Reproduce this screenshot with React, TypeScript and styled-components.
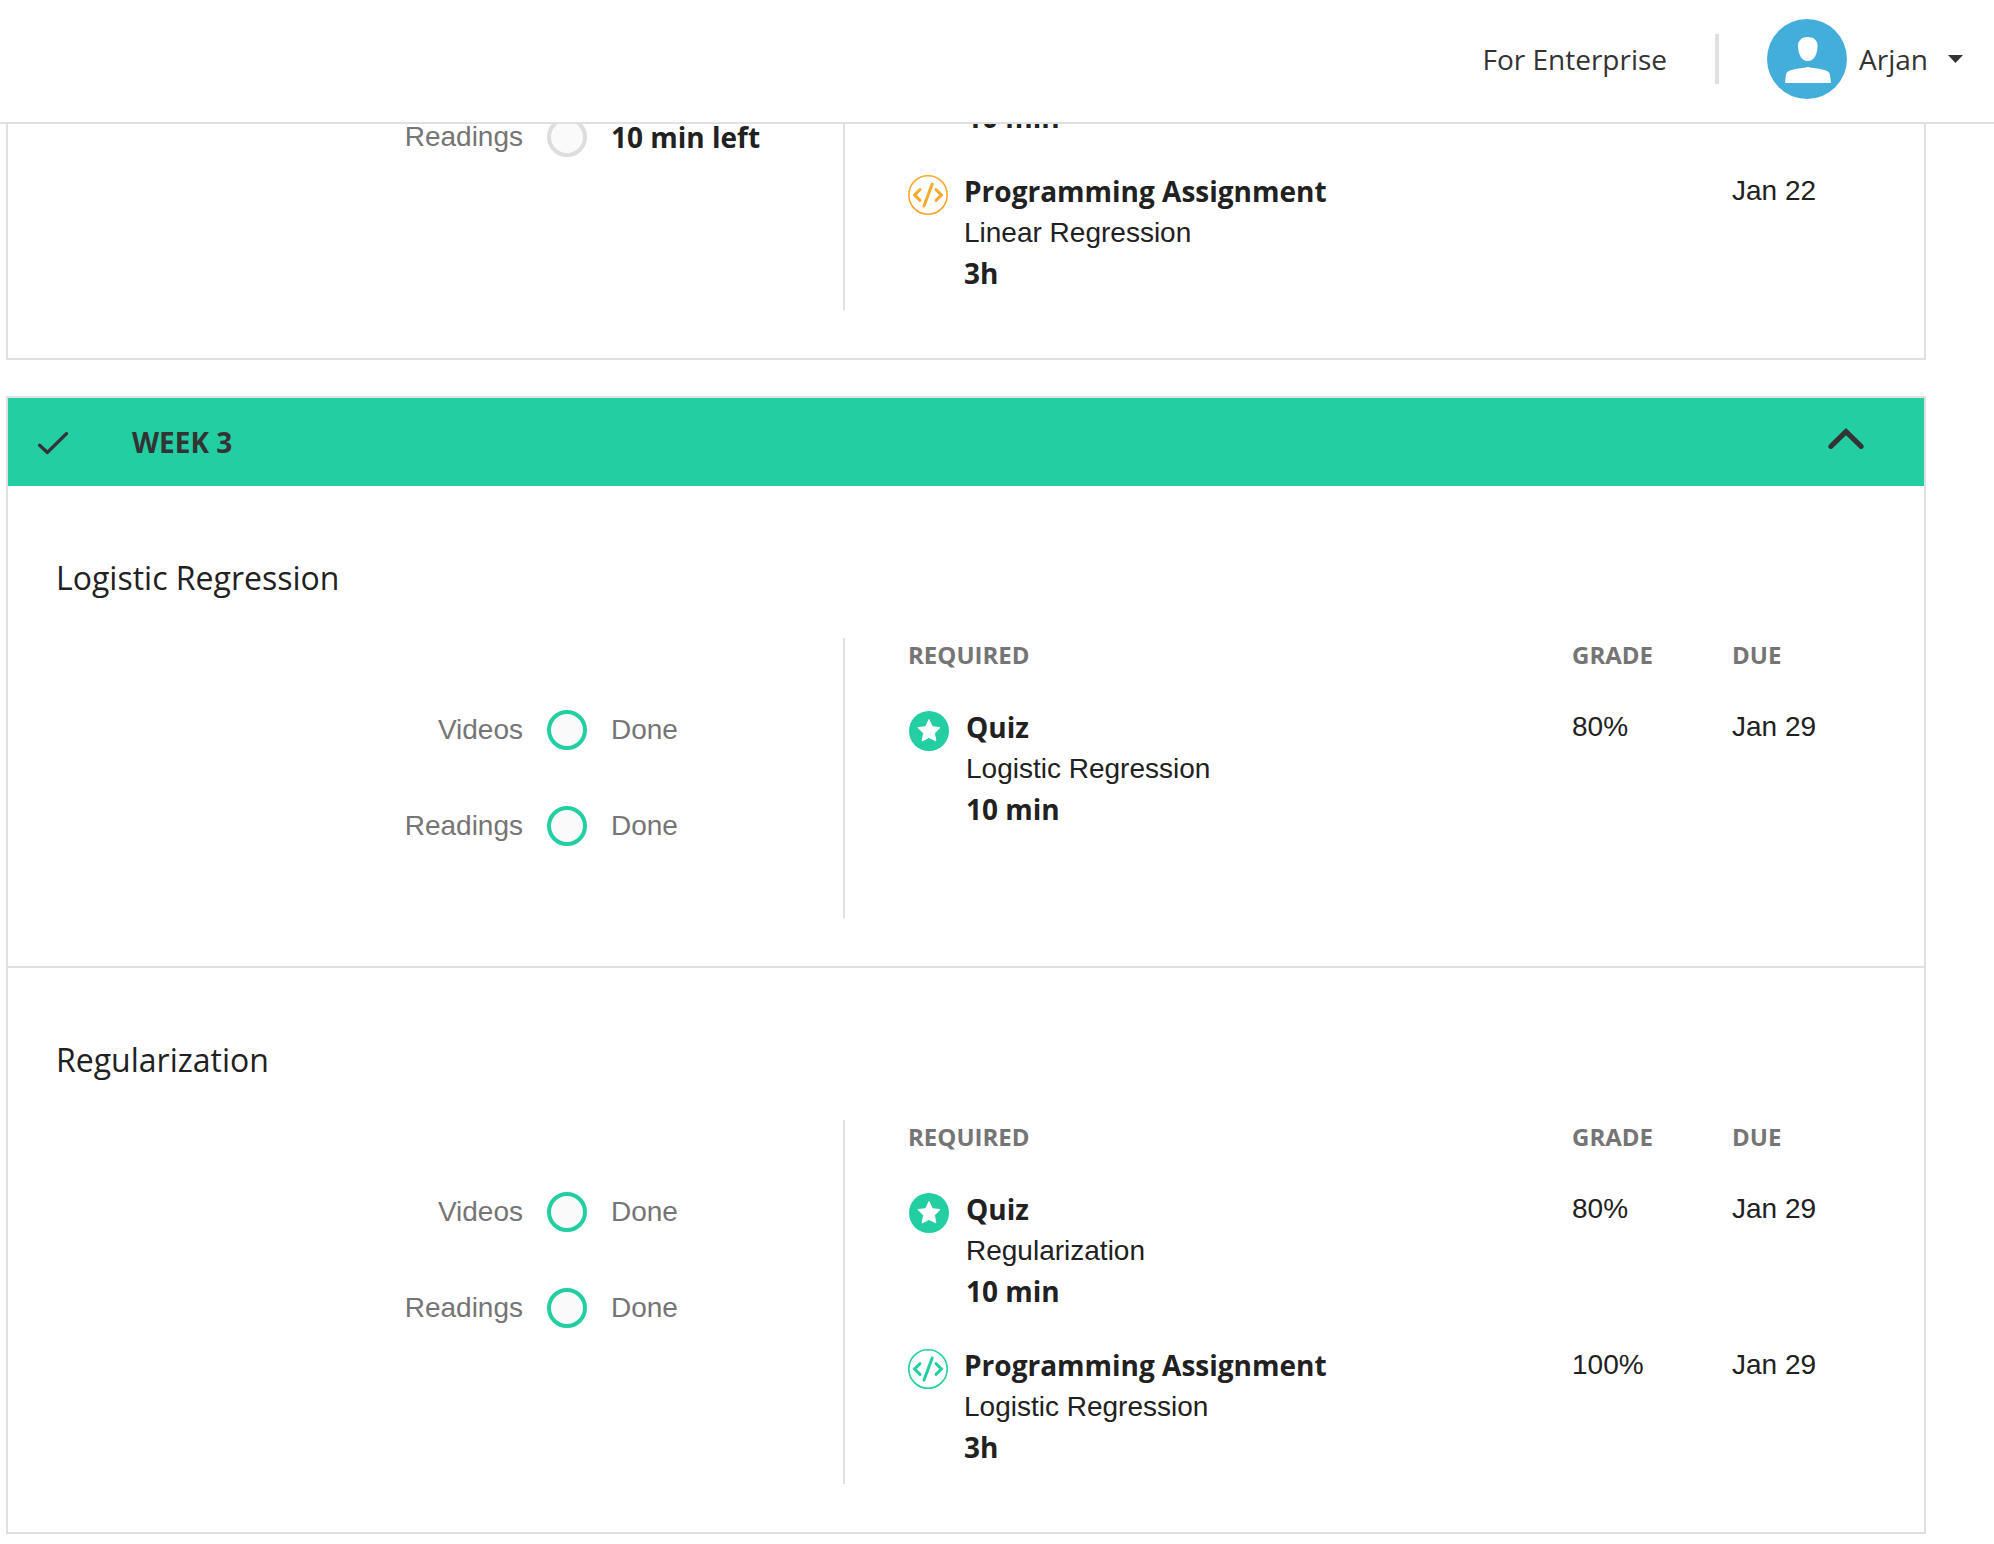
import React, { useState } from 'react';
import styled, { createGlobalStyle } from 'styled-components';

const line = '#e0e0e0';
const green = '#23cea3';
const amber = '#f9aa2c';
const ink = '#212121';
const dark = '#333333';
const muted = '#757575';
const humanist = `'Open Sans', 'Noto Sans', sans-serif`;
const grotesque = `Helvetica, 'Liberation Sans', Arial, sans-serif`;

const GlobalStyle = createGlobalStyle`
  *, *::before, *::after { box-sizing: border-box; }
  body {
    margin: 0;
    background: #ffffff;
    color: ${ink};
    font: 28px/41px ${grotesque};
  }
  button { border: 0; background: none; padding: 0; margin: 0; color: inherit; font: inherit; cursor: pointer; }
  a { color: inherit; text-decoration: none; }
`;

/* ---------- top bar ---------- */

const TopBar = styled.header`
  display: flex;
  align-items: center;
  justify-content: flex-end;
  height: 124px;
  padding: 0 31px 4px 0;
  border-bottom: 2px solid ${line};
  background: #ffffff;
  color: ${dark};
  font-family: ${humanist};
  line-height: 42px;
`;

const BarDivider = styled.span`
  width: 4px;
  height: 50px;
  margin: 0 48px;
  background: ${line};
`;

const AccountButton = styled.button`
  display: flex;
  align-items: center;
`;

const AccountName = styled.span`
  margin: 0 20px 0 12px;
`;

/* ---------- cards ---------- */

const Weeks = styled.main`
  display: flex;
  flex-direction: column;
  gap: 36px;
  padding: 0 68px 10px 6px;
`;

const Card = styled.section`
  border: 2px solid ${line};
`;

/* Card that is scrolled up so that only its lower end shows below the top bar. */
const ScrolledCard = styled(Card)`
  display: flex;
  flex-direction: column;
  justify-content: flex-end;
  height: 236px;
  overflow: hidden;
  border-top: 0;
`;

const WeekHeading = styled.h2`
  margin: 0;
  font: 700 28px/88px ${humanist};
`;

const WeekButton = styled.button`
  display: flex;
  align-items: center;
  width: 100%;
  padding: 0 58px 0 28px;
  background: ${green};
  color: ${dark};
  text-align: left;
`;

const WeekName = styled.span`
  flex: 1;
  padding-left: 60px;
`;

const ModuleBox = styled.article<{ $tail?: boolean }>`
  padding: ${(p) => (p.$tail ? '0 48px 48px' : '68px 48px 48px')};
  & + & { border-top: 2px solid ${line}; }
`;

const ModuleTitle = styled.h3`
  margin: 0 0 36px;
  font: 400 32px/48px ${humanist};
`;

const Columns = styled.div`
  display: grid;
  grid-template-columns: 787fr 1033fr;
`;

/* ---------- progress column ---------- */

const ProgressList = styled.ul<{ $tail?: boolean }>`
  display: flex;
  flex-direction: column;
  gap: 56px;
  margin: 0;
  padding: ${(p) => (p.$tail ? '20px 0 0' : '72px 0')};
  list-style: none;
  color: ${muted};
`;

const ProgressRow = styled.li`
  display: grid;
  grid-template-columns: 467fr 40px 232fr;
  column-gap: 24px;
  align-items: center;
  line-height: 40px;
`;

const ProgressLabel = styled.span`
  text-align: right;
`;

const Ring = styled.span<{ $done: boolean }>`
  width: 40px;
  height: 40px;
  border: 4px solid ${(p) => (p.$done ? green : '#dddddd')};
  border-radius: 50%;
  background: #fafafa;
`;

const Remaining = styled.strong`
  color: ${ink};
  font: 700 28px/40px ${humanist};
`;

/* ---------- required column ---------- */

const RequiredPanel = styled.div`
  padding-left: 63px;
  border-left: 2px solid ${line};
`;

const RequiredTable = styled.table`
  width: 100%;
  border-collapse: collapse;
  table-layout: fixed;
`;

const HeadCell = styled.th`
  height: 52px;
  padding: 0;
  color: ${muted};
  font: 700 24px/34px ${humanist};
  text-align: left;
  text-transform: uppercase;
  vertical-align: top;
`;

const GradeColumn = styled.col`
  width: 160px;
`;

const DueColumn = styled.col`
  width: 144px;
`;

const Cell = styled.td`
  padding: 17px 0 16px;
  line-height: 40px;
  vertical-align: top;
`;

/* Last line of a task whose upper lines lie above the visible area. */
const TimeOnlyCell = styled.td`
  padding: 0 0 16px 58px;
  vertical-align: top;
`;

const Item = styled.div`
  display: flex;
  align-items: flex-start;
  gap: 16px;
  line-height: 41px;
  svg { flex: none; margin-top: 4px; }
`;

const ItemText = styled.div`
  display: flex;
  flex-direction: column;
`;

const Strong = styled.strong`
  display: block;
  font: 700 28px/41px ${humanist};
`;

/* ---------- icons ---------- */

const Avatar = () => (
  <svg width="80" height="80" viewBox="0 0 80 80" aria-hidden="true">
    <circle cx="40" cy="40" r="40" fill="#44aeda" />
    <path
      d="M40.8 18C46.5 18 50.8 21.4 50.6 27C50.3 36 46.6 42 40.8 42S31.3 36 31 27C30.8 21.4 35.1 18 40.8 18Z"
      fill="#fff"
    />
    <path
      d="M18 64L19 55.5C19.3 53.3 21.5 51.8 24.5 51C30 49.6 36.5 49 40.8 48C45 49 52 49.6 57.4 51C60.5 51.8 62.6 53.3 62.9 55.5L64 64Z"
      fill="#fff"
    />
  </svg>
);

const Caret = () => (
  <svg width="15" height="8" viewBox="0 0 15 8" aria-hidden="true">
    <path d="M0 0H15L7.5 8Z" fill={dark} />
  </svg>
);

const Check = () => (
  <svg width="36" height="36" viewBox="0 0 36 36" fill="none" stroke={dark} strokeWidth="3.4" strokeLinecap="round" aria-hidden="true">
    <path d="M11.6 11.6" />
    <path d="M11.4 28.4L30.5 9.6M11.4 28.4L11.4 28.4L3.6 21.2" strokeLinejoin="miter" />
  </svg>
);

const ChevronUp = () => (
  <svg width="38" height="28" viewBox="0 0 38 28" fill="none" stroke={dark} strokeWidth="5" aria-hidden="true">
    <path d="M2.9 18.4L18 3.6L33.1 18.4" strokeLinecap="round" />
  </svg>
);

const StarBadge = () => (
  <svg width="42" height="40" viewBox="0 0 42 40" aria-hidden="true">
    <circle cx="21" cy="20" r="20" fill={green} />
    <path
      d="M21 8.5L24.4 15.7L32 16.6L26.4 22.2L27.9 30L21 26.4L14.1 30L15.6 22.2L10 16.6L17.6 15.7Z"
      fill="#fff"
      stroke="#fff"
      strokeWidth="1"
      strokeLinejoin="round"
    />
  </svg>
);

const CodeBadge = ({ color }: { color: string }) => (
  <svg width="40" height="40" viewBox="0 0 40 40" fill="none" stroke={color} strokeLinecap="round" aria-hidden="true">
    <circle cx="20" cy="20" r="19.2" strokeWidth="1.6" />
    <path d="M12 14.6L6.6 20L12 25.4M28 14.6L33.4 20L28 25.4M24.2 9L16 31" strokeWidth="3" />
  </svg>
);

/* ---------- content ---------- */

type Progress = { label: string; left?: string };
type Task = { kind: 'quiz' | 'code'; title: string; name: string; time: string; grade?: string; due: string };
type Module = { title: string; progress: Progress[]; tasks: Task[] };

const openAssignment: Task = {
  kind: 'code',
  title: 'Programming Assignment',
  name: 'Linear Regression',
  time: '3h',
  due: 'Jan 22',
};

const weekThree: Module[] = [
  {
    title: 'Logistic Regression',
    progress: [{ label: 'Videos' }, { label: 'Readings' }],
    tasks: [{ kind: 'quiz', title: 'Quiz', name: 'Logistic Regression', time: '10 min', grade: '80%', due: 'Jan 29' }],
  },
  {
    title: 'Regularization',
    progress: [{ label: 'Videos' }, { label: 'Readings' }],
    tasks: [
      { kind: 'quiz', title: 'Quiz', name: 'Regularization', time: '10 min', grade: '80%', due: 'Jan 29' },
      { kind: 'code', title: 'Programming Assignment', name: 'Logistic Regression', time: '3h', grade: '100%', due: 'Jan 29' },
    ],
  },
];

const ProgressItem = ({ label, left }: Progress) => (
  <ProgressRow>
    <ProgressLabel>{label}</ProgressLabel>
    <Ring $done={!left} />
    {left ? <Remaining>{left}</Remaining> : <span>Done</span>}
  </ProgressRow>
);

const TaskRow = ({ task }: { task: Task }) => (
  <tr>
    <Cell>
      <Item>
        {task.kind === 'quiz' ? <StarBadge /> : <CodeBadge color={task.grade ? green : amber} />}
        <ItemText>
          <Strong>{task.title}</Strong>
          <span>{task.name}</span>
          <Strong>{task.time}</Strong>
        </ItemText>
      </Item>
    </Cell>
    <Cell>{task.grade}</Cell>
    <Cell>{task.due}</Cell>
  </tr>
);

const TableColumns = () => (
  <colgroup>
    <col />
    <GradeColumn />
    <DueColumn />
  </colgroup>
);

const ModuleSection = ({ module }: { module: Module }) => (
  <ModuleBox>
    <ModuleTitle>{module.title}</ModuleTitle>
    <Columns>
      <ProgressList>
        {module.progress.map((p) => (
          <ProgressItem key={p.label} {...p} />
        ))}
      </ProgressList>
      <RequiredPanel>
        <RequiredTable>
          <TableColumns />
          <thead>
            <tr>
              <HeadCell scope="col">Required</HeadCell>
              <HeadCell scope="col">Grade</HeadCell>
              <HeadCell scope="col">Due</HeadCell>
            </tr>
          </thead>
          <tbody>
            {module.tasks.map((t) => (
              <TaskRow key={t.title} task={t} />
            ))}
          </tbody>
        </RequiredTable>
      </RequiredPanel>
    </Columns>
  </ModuleBox>
);

const ModuleTail = () => (
  <ModuleBox $tail>
    <Columns>
      <ProgressList $tail>
        <ProgressItem label="Readings" left="10 min left" />
      </ProgressList>
      <RequiredPanel>
        <RequiredTable>
          <TableColumns />
          <tbody>
            <tr>
              <TimeOnlyCell colSpan={3}>
                <Strong>10 min</Strong>
              </TimeOnlyCell>
            </tr>
            <TaskRow task={openAssignment} />
          </tbody>
        </RequiredTable>
      </RequiredPanel>
    </Columns>
  </ModuleBox>
);

export default function App() {
  const [open, setOpen] = useState(true);
  return (
    <>
      <GlobalStyle />
      <TopBar>
        <a href="#enterprise">For Enterprise</a>
        <BarDivider />
        <AccountButton type="button" aria-haspopup="menu">
          <Avatar />
          <AccountName>Arjan</AccountName>
          <Caret />
        </AccountButton>
      </TopBar>
      <Weeks>
        <ScrolledCard>
          <ModuleTail />
        </ScrolledCard>
        <Card>
          <WeekHeading>
            <WeekButton type="button" aria-expanded={open} onClick={() => setOpen(!open)}>
              <Check />
              <WeekName>WEEK 3</WeekName>
              <ChevronUp />
            </WeekButton>
          </WeekHeading>
          {open && weekThree.map((m) => <ModuleSection key={m.title} module={m} />)}
        </Card>
      </Weeks>
    </>
  );
}
